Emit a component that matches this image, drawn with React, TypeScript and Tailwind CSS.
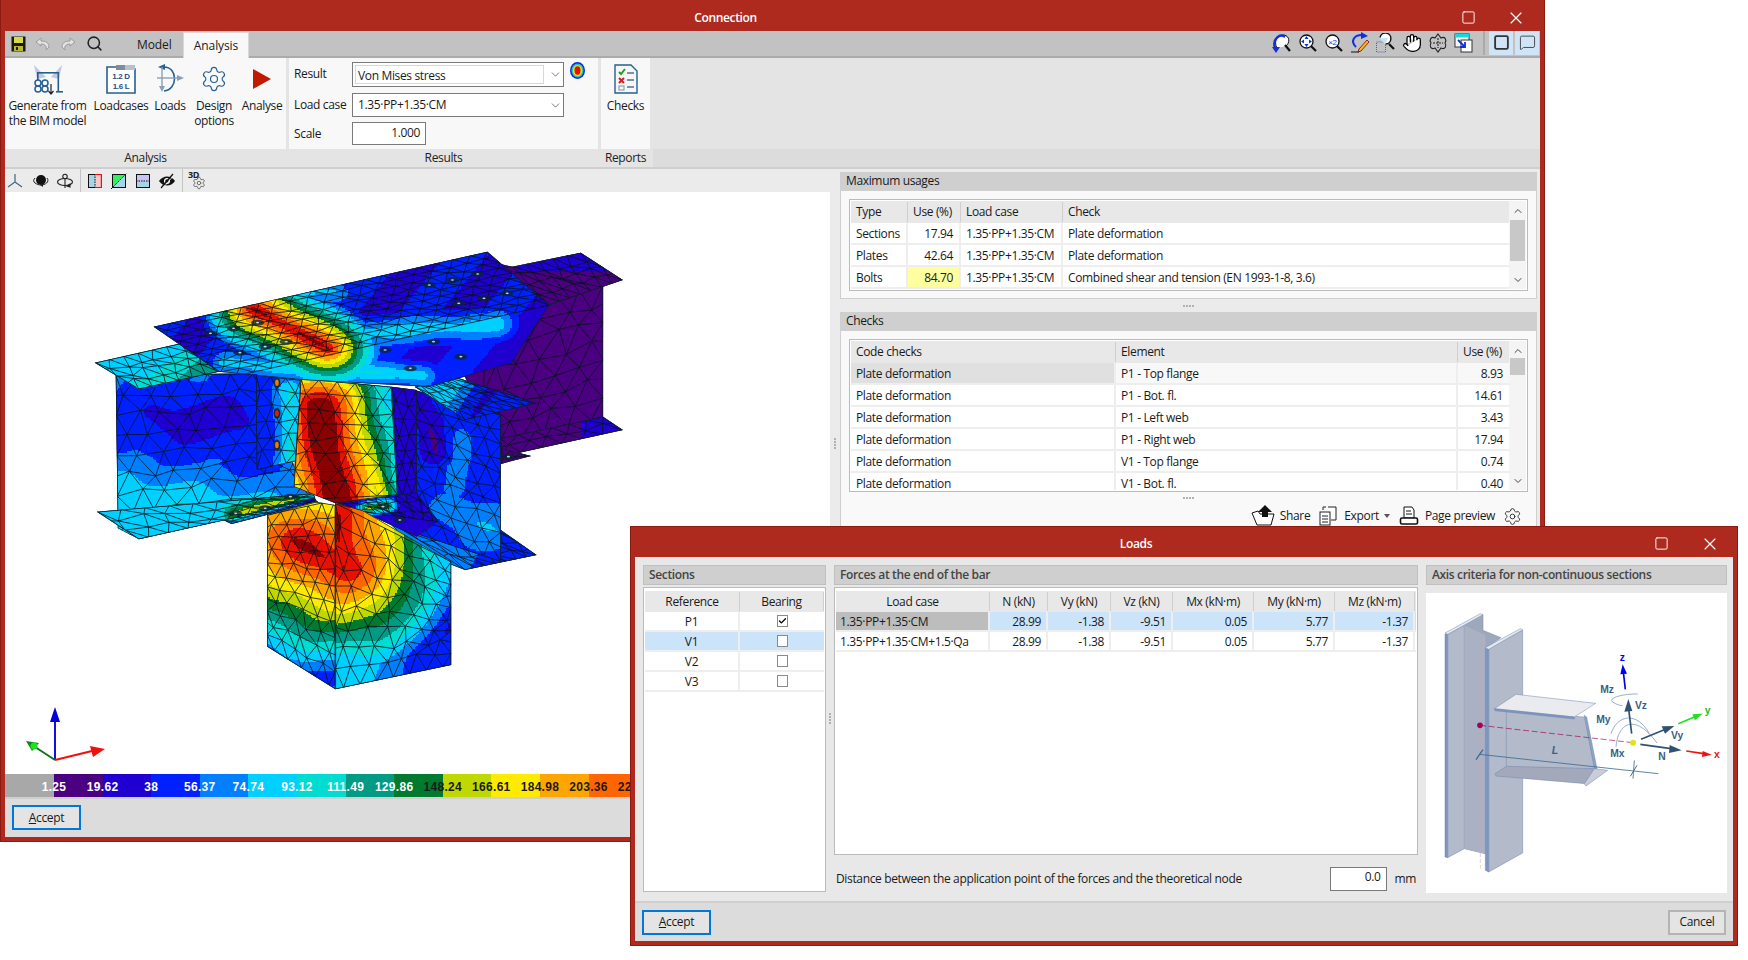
import { useMemo } from "react";
import { ChevronDown, ChevronUp, Check, Settings, Hand, Search, Square, X, MessageSquare } from "lucide-react";

type Pt = [number, number];
type Face = { poly: Pt[]; quad?: Pt[]; nu: number; nv: number; field: (x: number, y: number) => number };

const BANDS = ["#4B0082", "#2000D0", "#0020FF", "#0080FF", "#00D0FF", "#00DCD2", "#009A85", "#007A2E", "#BFD800", "#FFEB00", "#FFA500", "#FF6600", "#E81000", "#8B0000"];

// linear falloff around a segment, values are given in crop coordinates of the model
function seg(x: number, y: number, x1: number, y1: number, x2: number, y2: number, r: number) {
  const dx = x2 - x1;
  const dy = y2 - y1;
  const t = Math.max(0, Math.min(1, ((x - x1) * dx + (y - y1) * dy) / (dx * dx + dy * dy || 1)));
  const d = Math.hypot(x - x1 - t * dx, y - y1 - t * dy);
  return Math.max(0, 1 - d / r);
}
const clamp01 = (v: number) => Math.max(0, Math.min(1, v));

const FACES: Face[] = [
  { poly: [[1305, 315], [1433, 255], [1433, 650], [1190, 745], [1100, 520]], quad: [[1150, 330], [1433, 255], [1433, 650], [1150, 760]], nu: 5, nv: 7, field: () => 0.5 },
  { poly: [[1150, 180], [1217, 200], [1380, 158], [1480, 240], [1305, 315]], quad: [[1150, 215], [1380, 158], [1480, 240], [1305, 315]], nu: 7, nv: 4, field: (x, y) => (x > 1230 && y < 215 ? 1.5 : 0.5) },
  { poly: [[1190, 715], [1433, 650], [1480, 690], [1190, 770]], nu: 6, nv: 2, field: (x) => (x > 1380 ? 1.5 : 0.6) },
  { poly: [[1190, 745], [1262, 768], [1190, 792]], quad: [[1190, 745], [1262, 768], [1262, 780], [1190, 792]], nu: 3, nv: 2, field: () => 0.5 },
  {
    poly: [[275, 525], [610, 520], [700, 800], [745, 900], [330, 1018], [280, 985]],
    quad: [[275, 525], [710, 520], [745, 900], [280, 1010]],
    nu: 8,
    nv: 8,
    field: (x, y) => 2.8 - 1.4 * seg(x, y, 400, 660, 560, 660, 120) + clamp01((y - 770 - (x - 400) * 0.18) / 130) * 2,
  },
  { poly: [[225, 488], [430, 430], [520, 515], [330, 568]], nu: 6, nv: 4, field: (x, y) => 4.6 + clamp01((x - 330 + y - 500) / 200) * 2.2 },
  { poly: [[230, 935], [745, 880], [750, 900], [330, 1018]], nu: 9, nv: 3, field: (x, y) => 4.5 + 4 * seg(x, y, 555, 940, 700, 895, 40) },
  { poly: [[530, 960], [745, 895], [755, 905], [550, 972]], nu: 8, nv: 2, field: (x, y) => 2 + 6 * seg(x, y, 550, 945, 700, 890, 30) },
  { poly: [[900, 940], [1190, 990], [1275, 1065], [1105, 1110], [1000, 1060]], quad: [[900, 940], [1190, 990], [1275, 1065], [1105, 1110]], nu: 7, nv: 4, field: (x) => 3.4 - (x - 1000) / 260 },
  {
    poly: [[985, 570], [1190, 645], [1190, 1085], [985, 1000]],
    nu: 5,
    nv: 10,
    field: (x, y) => 2.4 + 1.5 * seg(x, y, 1090, 940, 1190, 1000, 100) + 0.9 * seg(x, y, 1090, 700, 1090, 840, 50) - 1.4 * seg(x, y, 1000, 600, 1040, 760, 45),
  },
  { poly: [[930, 560], [990, 570], [990, 880], [945, 890]], nu: 2, nv: 7, field: () => 1.4 },
  { poly: [[985, 560], [1080, 530], [1275, 610], [1105, 660]], nu: 7, nv: 4, field: (x, y) => 4.6 - clamp01((x - 1060 + (y - 590) * 0.5) / 90) * 2.6 },
  { poly: [[790, 905], [990, 878], [1040, 965], [990, 1010], [860, 935]], quad: [[790, 905], [990, 878], [1040, 965], [860, 935]], nu: 8, nv: 3, field: (x, y) => 1.6 + 7 * seg(x, y, 870, 925, 920, 915, 30) },
  {
    poly: [[635, 945], [750, 905], [797, 915], [797, 1468], [635, 1340]],
    quad: [[635, 945], [797, 900], [797, 1468], [635, 1340]],
    nu: 5,
    nv: 11,
    field: (x, y) => 3 + 10.2 * seg(x, y, 700, 1020, 797, 1090, 330),
  },
  {
    poly: [[797, 910], [860, 930], [1072, 1085], [1072, 1395], [797, 1468]],
    quad: [[797, 910], [1072, 1085], [1072, 1395], [797, 1468]],
    nu: 7,
    nv: 9,
    field: (x, y) => Math.max(2.2 + 2.6 * clamp01(1 - (x - 800) / 260), 3 + 10.2 * seg(x, y, 797, 950, 815, 1100, 330) - 1.5 * clamp01((x - 900) / 150)),
  },
  { poly: [[608, 525], [715, 540], [715, 780], [610, 810]], nu: 3, nv: 6, field: (x, y) => 2.5 + 2.8 * seg(x, y, 690, 570, 690, 790, 50) },
  {
    poly: [[715, 535], [930, 560], [945, 885], [797, 910], [697, 860], [700, 795]],
    quad: [[715, 535], [930, 560], [945, 885], [697, 900]],
    nu: 5,
    nv: 8,
    field: (x, y) => Math.max(5.2, 15 * seg(x, y, 755, 620, 800, 910, 240), 9.6 * seg(x, y, 830, 650, 905, 880, 110)),
  },
  {
    poly: [[365, 380], [1158, 155], [1305, 315], [1215, 490], [1020, 560], [720, 540], [520, 515]],
    quad: [[365, 380], [1158, 155], [1305, 315], [520, 540]],
    nu: 19,
    nv: 10,
    field: (x, y) => {
      const hot = 2 + 11.2 * seg(x, y, 600, 325, 780, 445, 130);
      const ring = 1 + 11.4 * seg(x, y, 770, 452, 770, 452, 95);
      const cool = 3 * seg(x, y, 850, 400, 1180, 372, 60) + 2.6 * seg(x, y, 680, 290, 790, 270, 60) + 3.2 * seg(x, y, 540, 490, 1000, 525, 50);
      const base = x > 960 && y < 280 ? 0.5 : x > 720 && y < 270 ? 1.5 : 1.8;
      return Math.max(base + cool, hot, ring);
    },
  },
];

const BOLTS: Pt[] = [[500, 400], [555, 385], [612, 368], [570, 458], [630, 440], [680, 425], [1020, 255], [1075, 240], [1135, 222], [1090, 310], [1150, 295], [1205, 280], [915, 450], [975, 505], [1030, 425], [1095, 470], [560, 940], [630, 925], [690, 890], [910, 920], [950, 960], [1208, 770]];
const z = ([x, y]: Pt): Pt => [x / 2.376, 200 + y / 3];
const pts = (p: Pt[]) => p.map((q) => z(q).map((n) => n.toFixed(1)).join(",")).join(" ");

function buildFace(f: Face, idx: number) {
  const real = f.poly.map(z);
  const xs = real.map((p) => p[0]);
  const ys = real.map((p) => p[1]);
  const x0 = Math.floor(Math.min(...xs));
  const x1 = Math.ceil(Math.max(...xs));
  const y0 = Math.floor(Math.min(...ys));
  const y1 = Math.ceil(Math.max(...ys));
  const paths: string[] = BANDS.map(() => "");
  const step = 1.5;
  for (let y = y0; y < y1; y += step) {
    let start = x0;
    let cur = -1;
    for (let x = x0; x <= x1 + step; x += step) {
      const zx = (x + step / 2) * 2.376;
      const zy = (y + step / 2 - 200) * 3;
      const v = x > x1 ? -1 : Math.max(0, Math.min(13, Math.floor(f.field(zx, zy) + 0.25 * Math.sin(zx / 31 + zy / 47))));
      if (v !== cur) {
        if (cur >= 0) paths[cur] += `M${start} ${y}H${x}V${y + step}H${start}Z`;
        start = x;
        cur = v;
      }
    }
  }
  // staggered triangle lattice, moved a little at each inner node
  const q = (f.quad ?? f.poly).map(z);
  let seed = 17 + idx * 31;
  const rnd = () => {
    seed = (seed * 16807) % 2147483647;
    return seed / 2147483647 - 0.5;
  };
  const du = Math.hypot(q[1][0] - q[0][0], q[1][1] - q[0][1]) / f.nu;
  const dv = Math.hypot(q[3][0] - q[0][0], q[3][1] - q[0][1]) / f.nv;
  const amp = Math.min(du, dv) * 0.45;
  const grid: Pt[][] = [];
  for (let j = 0; j <= f.nv; j++) {
    const row: Pt[] = [];
    const odd = j % 2 === 1;
    const count = odd ? f.nu + 2 : f.nu + 1;
    for (let i = 0; i < count; i++) {
      const u = odd ? clamp01((i - 0.5) / f.nu) : i / f.nu;
      const v = j / f.nv;
      const px = (1 - v) * ((1 - u) * q[0][0] + u * q[1][0]) + v * ((1 - u) * q[3][0] + u * q[2][0]);
      const py = (1 - v) * ((1 - u) * q[0][1] + u * q[1][1]) + v * ((1 - u) * q[3][1] + u * q[2][1]);
      const inner = i > 0 && j > 0 && i < count - 1 && j < f.nv;
      row.push([px + (inner ? rnd() * amp : 0), py + (inner ? rnd() * amp : 0)]);
    }
    grid.push(row);
  }
  let mesh = "";
  const ln = (a: Pt, b: Pt) => {
    mesh += `M${a[0].toFixed(1)} ${a[1].toFixed(1)}L${b[0].toFixed(1)} ${b[1].toFixed(1)}`;
  };
  for (let j = 0; j <= f.nv; j++) {
    const row = grid[j];
    for (let i = 0; i < row.length - 1; i++) ln(row[i], row[i + 1]);
    if (j === f.nv) break;
    const next = grid[j + 1];
    if (j % 2 === 0) {
      row.forEach((p, i) => {
        ln(p, next[i]);
        ln(p, next[i + 1]);
      });
    } else {
      next.forEach((p, i) => {
        ln(p, row[i]);
        ln(p, row[i + 1]);
      });
    }
  }
  return { paths, mesh };
}

function ModelView() {
  const built = useMemo(() => FACES.map(buildFace), []);
  return (
    <svg viewBox="5 192 825 582" className="w-full h-full block">
      <defs>
        {FACES.map((f, i) => (
          <clipPath id={`face${i}`} key={i}>
            <polygon points={pts(f.poly)} />
          </clipPath>
        ))}
      </defs>
      {FACES.map((f, i) => (
        <g key={i} clipPath={`url(#face${i})`}>
          {built[i].paths.map((d, b) => d && <path key={b} d={d} fill={BANDS[b]} shapeRendering="crispEdges" />)}
          <path d={built[i].mesh} fill="none" stroke="#04141c" strokeWidth="0.8" />
          <polygon points={pts(f.poly)} fill="none" stroke="#10202a" strokeWidth="1.4" />
        </g>
      ))}
      {BOLTS.map((b, i) => {
        const [x, y] = z(b);
        return (
          <g key={i}>
            <ellipse cx={x} cy={y} rx="6.5" ry="3" fill="#0a2430" fillOpacity="0.75" />
            <ellipse cx={x} cy={y} rx="1.6" ry="0.8" fill="#c8d4d4" />
          </g>
        );
      })}
      {([[658, 548], [658, 640], [658, 735]] as Pt[]).map((b, i) => {
        const [x, y] = z(b);
        return (
          <g key={i}>
            <ellipse cx={x} cy={y} rx="3.4" ry="5.5" fill="#122c3a" />
            <ellipse cx={x} cy={y} rx="1.8" ry="3.2" fill={i === 1 ? "#e02000" : "#f07a10"} />
          </g>
        );
      })}
      {/* axes */}
      <line x1="55" y1="760" x2="55" y2="715" stroke="#1010e0" strokeWidth="2" />
      <polygon points="55,707 50,722 60,722" fill="#0000e0" />
      <line x1="55" y1="760" x2="32" y2="745" stroke="#107020" strokeWidth="2" />
      <polygon points="26,741 39,743 32,751" fill="#0a8a1c" />
      <circle cx="34" cy="746" r="3.5" fill="#20e020" />
      <line x1="55" y1="760" x2="92" y2="751" stroke="#f01010" strokeWidth="2" />
      <polygon points="105,749 90,746 93,757" fill="#f01010" />
    </svg>
  );
}

const LEGEND: { c: string; w?: number; t?: string; dark?: boolean }[] = [
  { c: "#A8A8A8", w: 49 },
  { c: "#4B0082", t: "1.25" },
  { c: "#2000D0", t: "19.62" },
  { c: "#0020FF", t: "38" },
  { c: "#0080FF", t: "56.37" },
  { c: "#00D0FF", t: "74.74" },
  { c: "#00DCD2", t: "93.12" },
  { c: "#009A85", t: "111.49" },
  { c: "#007A2E", t: "129.86" },
  { c: "#BFD800", t: "148.24", dark: true },
  { c: "#FFEB00", t: "166.61", dark: true },
  { c: "#FFA500", t: "184.98", dark: true },
  { c: "#FF6600", t: "203.36", dark: true },
  { c: "#E81000", t: "221.73", dark: true },
];

function SaveIcon() {
  return (
    <svg width="15" height="16" viewBox="0 0 15 16">
      <rect x="0.5" y="0.5" width="14" height="15" fill="#1a1a10" />
      <rect x="3" y="1" width="9" height="6" fill="#d8d850" />
      <rect x="3" y="10" width="9" height="5" fill="#b8b838" />
      <rect x="5" y="11" width="2" height="3" fill="#1a1a10" />
    </svg>
  );
}
function UndoIcon({ flip }: { flip?: boolean }) {
  return (
    <svg width="16" height="14" viewBox="0 0 16 14" className={flip ? "-scale-x-100" : ""}>
      <path d="M1 5 L6 1 V4 C11 4 14 6 14 10 L11 13 C12 9 10 7 6 7 V9 Z" fill="#e2e2e2" stroke="#9a9a9a" />
    </svg>
  );
}
function GenIcon() {
  return (
    <svg width="34" height="32" viewBox="0 0 34 32">
      <polygon points="3,2 15,14 6,16" fill="#bfc8e6" />
      <polygon points="31,2 20,14 28,16" fill="#bfc8e6" />
      <rect x="6" y="9" width="22" height="1.6" fill="#27608f" />
      <rect x="6" y="9" width="1.6" height="8" fill="#27608f" />
      <rect x="26.5" y="9" width="1.6" height="20" fill="#27608f" />
      <rect x="25" y="28" width="7" height="1.6" fill="#27608f" />
      <g fill="none" stroke="#27608f" strokeWidth="1.5">
        <circle cx="7" cy="20" r="3" /><circle cx="14" cy="20" r="3" /><circle cx="7" cy="26" r="3" /><circle cx="14" cy="26" r="3" />
      </g>
      <path d="M20 21V30M17.5 28L20 31L22.5 28" stroke="#222" strokeWidth="1.2" fill="none" />
    </svg>
  );
}
function LoadcaseIcon() {
  return (
    <svg width="30" height="30" viewBox="0 0 30 30">
      <path d="M1 3H12L14 5H29V29H1Z" fill="#fff" stroke="#27608f" strokeWidth="1.6" />
      <rect x="10" y="1" width="9" height="5" fill="#7f8ba0" />
      <rect x="19" y="1" width="10" height="5" fill="#b9c0cc" />
      <text x="15" y="15" textAnchor="middle" fontSize="8" fontWeight="700" fill="#27507a" fontFamily="Liberation Sans, sans-serif">1.2 D</text>
      <text x="15" y="25" textAnchor="middle" fontSize="8" fontWeight="700" fill="#27507a" fontFamily="Liberation Sans, sans-serif">1.6 L</text>
    </svg>
  );
}
function LoadsIcon() {
  return (
    <svg width="28" height="30" viewBox="0 0 28 30">
      <path d="M8 3 C22 3 22 26 8 27" fill="none" stroke="#27608f" strokeWidth="1.6" />
      <polygon points="2,3 9,0 9,6" fill="#27608f" />
      <line x1="6" y1="3" x2="6" y2="25" stroke="#8ba0b8" strokeWidth="1.4" />
      <line x1="1" y1="14" x2="23" y2="14" stroke="#8ba0b8" strokeWidth="1.4" />
      <polygon points="28,14 21,11 21,17" fill="#8ba0b8" />
      <polygon points="6,28 3,22 9,22" fill="#8ba0b8" />
    </svg>
  );
}
function ChecksIcon() {
  return (
    <svg width="24" height="30" viewBox="0 0 24 30">
      <path d="M1 1H17L23 7V29H1Z" fill="#f4f6f9" stroke="#27608f" strokeWidth="1.4" />
      <path d="M5 8L7 10L11 5" stroke="#20a020" strokeWidth="2" fill="none" />
      <path d="M5 14L10 19M10 14L5 19" stroke="#d02020" strokeWidth="2" />
      <rect x="5" y="22" width="5" height="4" fill="none" stroke="#8090a8" />
      <path d="M13 9H20M13 16H20M13 23H20" stroke="#8090a8" strokeWidth="2" />
    </svg>
  );
}
function Rainbow() {
  return (
    <svg width="15" height="17" viewBox="0 0 15 17" className="mb-auto ml-[6px]">
      <ellipse cx="7.5" cy="8.5" rx="7.5" ry="8.5" fill="#1020f0" />
      <ellipse cx="7.5" cy="8.5" rx="6" ry="7" fill="#10d0b0" />
      <ellipse cx="7.5" cy="8.5" rx="4.6" ry="5.6" fill="#f0e000" />
      <ellipse cx="7.5" cy="8.5" rx="3" ry="4.2" fill="#e01010" />
    </svg>
  );
}

function ToolIcon({ n }: { n: number }) {
  const blue = "#1030e0";
  const k = "#111";
  const glass = (
    <>
      <circle cx="8.5" cy="8.5" r="6.5" fill="#fff" stroke={k} strokeWidth="1.3" />
      <path d="M13 13L18 18" stroke={k} strokeWidth="2.2" />
    </>
  );
  if (n === 0)
    return (
      <svg width="20" height="20" viewBox="0 0 20 20">
        <path d="M5 15C1 8 6 1 12 2C18 3 18 10 14 13" fill="#fff" stroke={k} />
        <path d="M13 12L18 18" stroke={k} strokeWidth="2.2" />
        <path d="M3 15C0 6 8 0 13 4" fill="none" stroke={blue} strokeWidth="2.4" />
        <polygon points="0,14 8,14 4,20" fill={blue} />
      </svg>
    );
  if (n === 1)
    return (
      <svg width="20" height="20" viewBox="0 0 20 20">
        {glass}
        <path d="M8.5 3L6.5 6H10.5ZM8.5 14L6.5 11H10.5ZM3 8.5L6 6.5V10.5ZM14 8.5L11 6.5V10.5Z" fill={blue} />
      </svg>
    );
  if (n === 2)
    return (
      <svg width="20" height="20" viewBox="0 0 20 20">
        {glass}
        <text x="8.5" y="11.5" fontSize="8" textAnchor="middle" fill={blue} fontFamily="Liberation Sans, sans-serif">×2</text>
      </svg>
    );
  if (n === 3)
    return (
      <svg width="20" height="22" viewBox="0 0 20 22">
        <path d="M6 15C0 9 4 3 12 3" fill="none" stroke={blue} strokeWidth="2" />
        <polygon points="11,0 18,4 11,7" fill={blue} />
        <path d="M9 17L17 8L19 10L11 19L8 20Z" fill="#e8c020" stroke="#a02020" />
        <path d="M1 20H9" stroke={k} />
      </svg>
    );
  if (n === 4)
    return (
      <svg width="20" height="20" viewBox="0 0 20 20">
        <rect x="0.5" y="9" width="9" height="10" fill="none" stroke="#4060d0" strokeDasharray="1 1" />
        <path d="M4 4.5A5.5 5.5 0 1 1 9.5 11" fill="#fff" stroke={k} strokeWidth="1.4" />
        <path d="M3 5H12L9 11Z" fill="#c4e4ee" />
        <path d="M13 11L18 16" stroke={k} strokeWidth="2.2" />
      </svg>
    );
  if (n === 5) return <Hand size={20} strokeWidth={1.5} className="text-black fill-white" />;
  if (n === 6)
    return (
      <svg width="20" height="20" viewBox="0 0 20 20" fill="none" stroke="#222" strokeWidth="1.1">
        <path d="M10 1L13 5C17 3 19 7 17 10C19 13 17 17 13 15L10 19L7 15C3 17 1 13 3 10C1 7 3 3 7 5Z" />
        <path d="M10 5V15M5 10H15" strokeDasharray="2 1" />
      </svg>
    );
  return (
    <svg width="20" height="20" viewBox="0 0 20 20">
      <rect x="1" y="1" width="14" height="13" fill="#fff" stroke="#333" />
      <rect x="1" y="1" width="14" height="3.5" fill="#18d8d8" />
      <rect x="7" y="7" width="11" height="12" fill="#fff" stroke="#333" />
      <path d="M4 7L11 14M11 9V14H6" stroke={blue} strokeWidth="1.8" fill="none" />
    </svg>
  );
}

function ViewIcon({ n }: { n: number }) {
  if (n === 0)
    return (
      <svg width="16" height="16" viewBox="0 0 16 16" fill="none" stroke="#3a6a80" strokeWidth="1.2">
        <path d="M8 1V9L1 14M8 9L15 14" />
      </svg>
    );
  if (n === 1)
    return (
      <svg width="18" height="16" viewBox="0 0 18 16">
        <circle cx="9" cy="7" r="5" fill="#111" />
        <path d="M3 5C-1 9 5 12 9 12C13 12 18 9 15 5" fill="none" stroke="#222" />
        <path d="M8 12L11 10V14Z" fill="#222" />
      </svg>
    );
  if (n === 2)
    return (
      <svg width="18" height="16" viewBox="0 0 18 16" fill="none" stroke="#222" strokeWidth="1.1">
        <circle cx="9" cy="3.5" r="2.2" />
        <path d="M9 6V15" />
        <ellipse cx="9" cy="9" rx="7.5" ry="3.5" />
        <path d="M11 13L14 11V14Z" fill="#222" />
      </svg>
    );
  if (n === 3)
    return (
      <svg width="14" height="14" viewBox="0 0 14 14">
        <rect x="0.5" y="0.5" width="13" height="13" fill="#a8d4e8" stroke="#111" />
        <rect x="7" y="1" width="6" height="12" fill="#f8c8c8" />
        <path d="M7 0V14" stroke="#111" strokeDasharray="1.5 1" />
        <path d="M13.5 0V14" stroke="#e81010" strokeWidth="1.4" />
        <path d="M7 0.5H14M7 13.5H14" stroke="#e81010" />
      </svg>
    );
  if (n === 4)
    return (
      <svg width="16" height="16" viewBox="0 0 16 16">
        <rect x="1.5" y="1.5" width="13" height="13" fill="#a8d4e8" stroke="#111" />
        <polygon points="2,2 14,2 2,14" fill="#30f060" />
        <path d="M0 16L16 0" stroke="#111" strokeDasharray="1.5 1" />
      </svg>
    );
  if (n === 5)
    return (
      <svg width="14" height="14" viewBox="0 0 14 14">
        <rect x="0.5" y="0.5" width="13" height="13" fill="#a8d4e8" stroke="#111" />
        <rect x="1" y="1" width="12" height="6" fill="#c8c4f4" />
        <path d="M0 7H14" stroke="#111" strokeDasharray="1.5 1" />
      </svg>
    );
  if (n === 6)
    return (
      <svg width="18" height="16" viewBox="0 0 18 16">
        <path d="M1 8C5 2 13 2 17 8C13 14 5 14 1 8Z" fill="#111" />
        <circle cx="9" cy="8" r="3" fill="#fff" />
        <circle cx="9" cy="8" r="1.8" fill="#111" />
        <path d="M3 15L15 1" stroke="#111" strokeWidth="1.2" />
        <path d="M5 15L17 1" stroke="#eee" strokeWidth="0.8" />
      </svg>
    );
  return (
    <div className="relative w-[18px] h-[18px]">
      <Settings size={14} strokeWidth={1.6} className="absolute right-0 bottom-0 text-[#666]" />
      <span className="absolute left-0 top-[-2px] text-[9px] font-bold leading-[10px] text-[#222]">3D</span>
    </div>
  );
}

function ViewSlot({ w, ml, n }: { w: number; ml?: number; n: number }) {
  return (
    <div style={{ width: w, marginLeft: ml ?? 0 }} className="shrink-0 flex items-center justify-center">
      <ViewIcon n={n} />
    </div>
  );
}

function RibbonBtn({ w, icon, children }: { w: number; icon: React.ReactNode; children: React.ReactNode }) {
  return (
    <div style={{ width: w }} className="shrink-0 flex flex-col items-center pt-[5px]">
      <div className="h-[32px] flex items-center justify-center">{icon}</div>
      <div className="mt-[3px] text-center leading-[15px] whitespace-pre">{children}</div>
    </div>
  );
}

function Group({ w, label, children }: { w: number; label: string; children: React.ReactNode }) {
  return (
    <div style={{ width: w }} className="shrink-0 flex flex-col mr-[3px] bg-[#f8f8f8]">
      <div className="flex-1 flex">{children}</div>
      <div className="h-[18px] bg-[#e4e4e4] text-center leading-[18px] text-[#222]">{label}</div>
    </div>
  );
}

function Combo({ value, inner }: { value: string; inner?: boolean }) {
  return (
    <div className={`w-[212px] border border-[#7a7a7a] bg-white flex items-center ${inner ? "h-[25px] p-[2px] pr-0" : "h-[24px] pl-[5px]"}`}>
      <div className={`flex-1 ${inner ? "h-full border border-[#d8d8d8] pl-[2px] leading-[19px]" : ""}`}>{value}</div>
      <ChevronDown size={13} strokeWidth={1.3} className="mx-[1px] ml-[5px] text-[#444]" />
    </div>
  );
}

function ScrollCol({ top, h }: { top: number; h: number }) {
  return (
    <div className="w-[17px] shrink-0 bg-[#f4f4f4] flex flex-col items-center">
      <ChevronUp size={12} strokeWidth={2} className="mt-[4px] shrink-0 text-[#444]" />
      <div style={{ marginTop: top, height: h }} className="w-[15px] bg-[#c8c8c8] shrink-0" />
      <ChevronDown size={12} strokeWidth={2} className="mt-auto mb-[3px] shrink-0 text-[#444]" />
    </div>
  );
}

type Col = { w: number; label: string; right?: boolean };

function Row({ cols, cells, bg }: { cols: Col[]; cells: string[]; bg?: (i: number) => string }) {
  return (
    <div className="flex h-[22px] border-b-2 border-[#eeeeee] bg-white shrink-0">
      {cols.map((c, i) => (
        <div
          key={i}
          style={{ width: c.w, backgroundColor: bg ? bg(i) : undefined }}
          className={`shrink-0 border-r-2 border-[#eeeeee] pl-[5px] pr-[6px] leading-[22px] whitespace-nowrap ${c.right ? "text-right" : ""}`}
        >
          {cells[i]}
        </div>
      ))}
    </div>
  );
}

function Head({ cols }: { cols: Col[] }) {
  return (
    <div className="flex h-[22px] bg-[#e8e8e8] shrink-0">
      {cols.map((c, i) => (
        <div key={i} style={{ width: c.w }} className="shrink-0 pl-[5px] pr-[6px] leading-[19px] my-[1px] border-r border-[#cfcfcf] whitespace-nowrap">
          {c.label}
        </div>
      ))}
    </div>
  );
}

const USAGE_COLS: Col[] = [
  { w: 57, label: "Type" },
  { w: 53, label: "Use (%)", right: true },
  { w: 102, label: "Load case" },
  { w: 448, label: "Check" },
];
const USAGES = [
  ["Sections", "17.94", "1.35·PP+1.35·CM", "Plate deformation"],
  ["Plates", "42.64", "1.35·PP+1.35·CM", "Plate deformation"],
  ["Bolts", "84.70", "1.35·PP+1.35·CM", "Combined shear and tension (EN 1993-1-8, 3.6)"],
];
const CHECK_COLS: Col[] = [
  { w: 265, label: "Code checks" },
  { w: 342, label: "Element" },
  { w: 53, label: "Use (%)", right: true },
];
const CHECKS = [
  ["P1 - Top flange", "8.93"],
  ["P1 - Bot. fl.", "14.61"],
  ["P1 - Left web", "3.43"],
  ["P1 - Right web", "17.94"],
  ["V1 - Top flange", "0.74"],
  ["V1 - Bot. fl.", "0.40"],
];

function Dots() {
  return (
    <div className="flex gap-[1px] justify-center">
      {[0, 1, 2, 3].map((i) => (
        <span key={i} className="w-[2px] h-[2px] bg-[#b0b0b0]" />
      ))}
    </div>
  );
}

function ShareIcon() {
  return (
    <svg width="24" height="22" viewBox="0 0 24 22">
      <path d="M1 8L6 20H20L23 9H9L7 6Z" fill="#fff" stroke="#111" />
      <polygon points="14,0 21,7 17,7 17,12 11,12 11,7 7,7" fill="#111" />
    </svg>
  );
}
function ExportIcon() {
  return (
    <svg width="20" height="20" viewBox="0 0 20 20" fill="#fff" stroke="#222">
      <path d="M10 1H18V14H13" />
      <rect x="2" y="6" width="10" height="13" />
      <path d="M4 10H10M4 13H10M4 16H10M5 4V1H8" fill="none" />
    </svg>
  );
}
function PrintIcon() {
  return (
    <svg width="20" height="20" viewBox="0 0 20 20" fill="#fff" stroke="#111">
      <path d="M5 1H13L15 4V12H5Z" />
      <path d="M7 5H12M7 8H13" />
      <rect x="1.5" y="12" width="17" height="6" rx="1.5" strokeWidth="1.6" />
    </svg>
  );
}

const SECTIONS = [
  { r: "P1", on: true },
  { r: "V1", sel: true },
  { r: "V2" },
  { r: "V3" },
];
const FORCE_COLS = [
  { w: 154, label: "Load case" },
  { w: 58, label: "N (kN)" },
  { w: 63, label: "Vy (kN)" },
  { w: 62, label: "Vz (kN)" },
  { w: 81, label: "Mx (kN·m)" },
  { w: 81, label: "My (kN·m)" },
  { w: 80, label: "Mz (kN·m)" },
];
const FORCES = [
  ["1.35·PP+1.35·CM", "28.99", "-1.38", "-9.51", "0.05", "5.77", "-1.37"],
  ["1.35·PP+1.35·CM+1.5·Qa", "28.99", "-1.38", "-9.51", "0.05", "5.77", "-1.37"],
];

function AxisPicture() {
  return (
    <svg viewBox="15 218 903 900" className="w-full h-full block" fontFamily="Liberation Sans, sans-serif">
      <g stroke="#7088b0" strokeWidth="1.5">
        <polygon points="130,315 186,283 186,330 240,352 193,384 193,1000 130,985" fill="#9ea8bc" />
        <polygon points="80,342 130,315 130,985 80,1012" fill="#b3bac9" />
        <polygon points="130,315 193,345 193,1000 130,985" fill="#a9b1c2" stroke="none" />
        <polygon points="72,340 80,342 80,1012 72,1010" fill="#7d96bf" />
        <polygon points="72,338 178,280 186,283 80,342" fill="#e7eaf0" />
        <polygon points="203,385 305,330 305,998 203,1055" fill="#b3bac9" />
        <polygon points="193,384 203,385 203,1055 193,1050" fill="#7d96bf" />
        <polygon points="193,382 298,325 305,328 203,387" fill="#e7eaf0" />
        <polygon points="256,572 490,590 523,745 256,742" fill="#b3bac9" />
        <polygon points="490,585 497,590 528,745 520,745" fill="#8ea2c2" />
        <polygon points="222,760 256,738 520,745 495,790 225,767" fill="#a3a9ba" />
        <polygon points="520,745 560,750 495,797 490,790" fill="#c8cdd8" />
        <polygon points="220,565 285,522 524,549 460,590" fill="#e9ebef" />
        <polygon points="220,565 460,590 460,596 222,571" fill="#7d96bf" />
      </g>
      <line x1="178" y1="350" x2="178" y2="1045" stroke="#c9a0b8" strokeWidth="1.5" strokeDasharray="12 6" />
      <line x1="177" y1="615" x2="636" y2="667" stroke="#a6005f" strokeWidth="2" strokeDasharray="18 8" />
      <circle cx="177" cy="615" r="8.5" fill="#a6005f" />
      <circle cx="636" cy="667" r="9" fill="#e3e01d" />
      <g stroke="#3f6b96" strokeWidth="2.5" fill="none">
        <line x1="175" y1="702" x2="712" y2="760" />
        <line x1="165" y1="718" x2="186" y2="688" strokeWidth="4" />
        <line x1="628" y1="768" x2="648" y2="735" strokeWidth="3" />
        <line x1="640" y1="720" x2="636" y2="775" />
      </g>
      <g stroke="#5f89ad" strokeWidth="2" fill="none">
        <path d="M570 640C590 580 650 575 685 640" />
        <path d="M585 680C590 610 640 575 708 668" />
        <path d="M650 521C600 520 560 535 575 545C585 552 595 555 605 556" />
      </g>
      <g stroke="#2f5273" strokeWidth="5" fill="#2f5273">
        <line x1="632" y1="640" x2="623" y2="565" />
        <polygon points="622,536 610,574 634,572" strokeWidth="0" />
        <line x1="660" y1="657" x2="730" y2="628" />
        <polygon points="760,617 722,618 732,640" strokeWidth="0" />
        <line x1="658" y1="672" x2="750" y2="685" />
        <polygon points="782,690 746,674 744,698" strokeWidth="0" />
      </g>
      <line x1="613" y1="507" x2="607" y2="455" stroke="#0000f0" strokeWidth="5" />
      <polygon points="605,432 598,462 618,460" fill="#0000f0" />
      <line x1="772" y1="610" x2="820" y2="590" stroke="#20e020" strokeWidth="5" />
      <polygon points="845,580 814,582 822,600" fill="#20e020" />
      <line x1="796" y1="692" x2="848" y2="700" stroke="#f01010" strokeWidth="5" />
      <polygon points="872,703 845,692 843,710" fill="#f01010" />
      <g fontSize="31" fill="#3a5f86" fontWeight="700">
        <text x="538" y="518">Mz</text>
        <text x="642" y="567">Vz</text>
        <text x="526" y="608">My</text>
        <text x="750" y="655">Vy</text>
        <text x="568" y="710">Mx</text>
        <text x="712" y="718">N</text>
        <text x="392" y="700" fontStyle="italic">L</text>
      </g>
      <text x="596" y="421" fontSize="31" fontWeight="700" fill="#0000f0">z</text>
      <text x="851" y="582" fontSize="31" fontWeight="700" fill="#20c020">y</text>
      <text x="879" y="713" fontSize="31" fontWeight="700" fill="#f01010">x</text>
    </svg>
  );
}

function PanelHead({ label }: { label: string }) {
  return <div className="h-[20px] shrink-0 bg-[#cfcfcf] border border-[#c0c0c0] px-[5px] leading-[18px] font-semibold text-[#444]">{label}</div>;
}

export default function App() {
  return (
    <div className="relative w-[1748px] h-[960px] bg-white overflow-hidden font-['Open_Sans',sans-serif] text-[12px] tracking-[-0.35px] text-[#1a1a1a]">
      {/* Connection window */}
      <div className="absolute left-0 top-0 w-[1545px] h-[842px] flex flex-col bg-[#ae2a1e] border border-[#8c1a10] border-t-0 px-[4px] pb-[4px]">
        <div className="h-[31px] shrink-0 relative flex items-center justify-center text-white text-[12px] font-semibold pt-[5px] pr-[94px]">
          Connection
          <Square size={15} strokeWidth={1.5} className="absolute left-[1456px] top-[10px]" />
          <X size={20} strokeWidth={1.4} className="absolute left-[1501px] top-[8px]" />
        </div>
        {/* menu strip */}
        <div className="h-[27px] shrink-0 bg-[#c2c2c2] border-b-2 border-[#ababab] flex items-end">
          <div className="flex items-center h-[25px] pl-[6px] gap-[9px]">
            <SaveIcon />
            <UndoIcon />
            <UndoIcon flip />
            <Search size={17} strokeWidth={2.2} className="ml-[1px] text-[#222]" />
          </div>
          <div className="ml-[34px] h-[25px] leading-[27px] w-[46px] tracking-[-0.1px]">Model</div>
          <div className="h-[26px] mb-[-2px] w-[66px] bg-[#f8f8f8] border border-[#d8d8d8] border-b-0 text-center leading-[25px] tracking-[-0.1px]">Analysis</div>
          <div className="ml-auto flex items-center h-[25px] mb-[1px]">
            <div className="flex items-center gap-[6px]">
              {[0, 1, 2, 3, 4, 5, 6, 7].map((n) => (
                <ToolIcon key={n} n={n} />
              ))}
            </div>
            <div className="w-[2px] h-[24px] bg-[#aaaaaa] ml-[9px] mr-[4px]" />
            <div className="w-[24px] h-[24px] bg-[#cfe5f7] flex items-center justify-center mr-[2px]">
              <Square size={17} strokeWidth={2.6} className="text-[#333]" />
            </div>
            <div className="w-[24px] h-[24px] bg-[#cfe5f7] flex items-center justify-center mr-[1px]">
              <MessageSquare size={17} strokeWidth={1.2} className="text-[#333]" />
            </div>
          </div>
        </div>
        {/* ribbon */}
        <div className="h-[111px] shrink-0 flex bg-[#e4e4e4] border-b-2 border-[#cfcfcf]">
          <Group w={281} label="Analysis">
            <RibbonBtn w={85} icon={<GenIcon />}>{"Generate from\nthe BIM model"}</RibbonBtn>
            <RibbonBtn w={62} icon={<LoadcaseIcon />}>Loadcases</RibbonBtn>
            <RibbonBtn w={36} icon={<LoadsIcon />}>Loads</RibbonBtn>
            <RibbonBtn w={52} icon={<Settings size={28} strokeWidth={1} className="text-[#27608f]" />}>{"Design\noptions"}</RibbonBtn>
            <RibbonBtn
              w={44}
              icon={
                <svg width="20" height="22" viewBox="0 0 20 22">
                  <polygon points="1,1 19,11 1,21" fill="#c01a00" />
                </svg>
              }
            >
              Analyse
            </RibbonBtn>
          </Group>
          <Group w={309} label="Results">
            <div className="flex w-full pt-[4px] pl-[5px]">
              <div className="w-[58px] flex flex-col text-[12px]">
                <div className="h-[25px] leading-[24px]">Result</div>
                <div className="mt-[6px] h-[24px] leading-[23px]">Load case</div>
                <div className="mt-[5px] h-[23px] leading-[24px]">Scale</div>
              </div>
              <div className="flex flex-col">
                <Combo value="Von Mises stress" inner />
                <div className="mt-[6px]"><Combo value="1.35·PP+1.35·CM" /></div>
                <div className="mt-[5px] w-[74px] h-[23px] border border-[#7a7a7a] bg-white text-right pr-[5px] leading-[19px]">1.000</div>
              </div>
              <Rainbow />
            </div>
          </Group>
          <Group w={49} label="Reports">
            <RibbonBtn w={49} icon={<ChecksIcon />}>Checks</RibbonBtn>
          </Group>
          <div className="flex-1 flex flex-col">
            <div className="flex-1" />
            <div className="h-[18px] bg-[#dcdcdc]" />
          </div>
        </div>
        {/* body */}
        <div className="flex-1 min-h-0 flex bg-[#ebebeb]">
          <div className="w-[825px] shrink-0 flex flex-col">
            <div className="h-[23px] shrink-0 flex items-center bg-[#ebebeb]">
              <ViewSlot w={20} n={0} />
              <ViewSlot w={26} ml={3} n={1} />
              <ViewSlot w={22} n={2} />
              <div className="w-px h-[23px] bg-[#c4c4c4] ml-[4px]" />
              <ViewSlot w={24} ml={2} n={3} />
              <ViewSlot w={24} n={4} />
              <ViewSlot w={24} n={5} />
              <ViewSlot w={24} n={6} />
              <div className="w-px h-[23px] bg-[#c4c4c4] ml-[3px]" />
              <ViewSlot w={24} ml={2} n={7} />
            </div>
            <div className="h-[582px] shrink-0 bg-white">
              <ModelView />
            </div>
            <div className="h-[23px] shrink-0 flex overflow-hidden font-['Liberation_Sans',sans-serif] font-bold text-[12px] tracking-[0.3px]">
              {LEGEND.map((l, i) => (
                <div key={i} style={{ backgroundColor: l.c, width: l.w ?? 48.6 }} className="relative shrink-0">
                  {l.t && (
                    <span className={`absolute left-0 top-[4px] -translate-x-1/2 whitespace-nowrap ${l.dark ? "text-[#1a1a1a]" : "text-white"}`}>{l.t}</span>
                  )}
                </div>
              ))}
            </div>
            <div className="flex-1 bg-[#dcdcdc] border-t-2 border-[#cfcfcf] flex items-start pl-[7px] pt-[6px]">
              <button className="w-[69px] h-[25px] border-2 border-[#0078d7] bg-[#e4e4e4] leading-[20px]"><u>A</u>ccept</button>
            </div>
          </div>
          <div className="w-[10px] shrink-0 flex items-center justify-center">
            <div className="flex flex-col gap-[1px] mt-[-120px]">
              {[0, 1, 2, 3].map((i) => (
                <span key={i} className="w-[2px] h-[2px] bg-[#b0b0b0]" />
              ))}
            </div>
          </div>
          <div className="flex-1 min-w-0 flex flex-col pt-[3px] pr-[3px]">
            <div className="h-[127px] shrink-0 flex flex-col border border-[#cfcfcf] bg-[#f9f9f9]">
              <div className="h-[18px] shrink-0 bg-[#cfcfcf] px-[5px] leading-[15px]">Maximum usages</div>
              <div className="mx-[8px] mt-[8px] h-[92px] border border-[#bbbbbb] p-[1px] flex bg-white">
                <div className="flex-1 flex flex-col min-w-0">
                  <Head cols={USAGE_COLS} />
                  {USAGES.map((r, i) => (
                    <Row key={i} cols={USAGE_COLS} cells={r} bg={(c) => (i === 2 && c === 1 ? "#ffff9f" : "")} />
                  ))}
                </div>
                <ScrollCol top={3} h={41} />
              </div>
            </div>
            <div className="h-[13px] shrink-0 flex items-center"><div className="w-full"><Dots /></div></div>
            <div className="flex-1 min-h-0 flex flex-col border border-[#cfcfcf] bg-[#f9f9f9]">
              <div className="h-[18px] shrink-0 bg-[#cfcfcf] px-[5px] leading-[16px]">Checks</div>
              <div className="mx-[8px] mt-[8px] h-[153px] shrink-0 border border-[#bbbbbb] p-[1px] flex bg-white overflow-hidden">
                <div className="flex-1 flex flex-col min-w-0 overflow-hidden">
                  <Head cols={CHECK_COLS} />
                  {CHECKS.map((r, i) => (
                    <Row key={i} cols={CHECK_COLS} cells={["Plate deformation", r[0], r[1]]} bg={(c) => (i === 0 && c === 0 ? "#e0e0e0" : i === 0 ? "#f8f8f8" : "")} />
                  ))}
                </div>
                <ScrollCol top={1} h={17} />
              </div>
              <div className="h-[12px] shrink-0 flex items-center"><div className="w-full"><Dots /></div></div>
              <div className="flex items-center justify-end h-[24px] pr-[14px] text-[12px]">
                <ShareIcon />
                <span className="ml-[5px] mr-[8px]">Share</span>
                <ExportIcon />
                <span className="ml-[6px]">Export</span>
                <span className="ml-[5px] mr-[9px] w-0 h-0 border-x-[3px] border-x-transparent border-t-[4px] border-t-[#555]" />
                <PrintIcon />
                <span className="ml-[6px] mr-[8px]">Page preview</span>
                <Settings size={19} strokeWidth={1.1} className="text-[#222]" />
              </div>
            </div>
          </div>
        </div>
      </div>

      {/* Loads window */}
      <div className="absolute left-[630px] top-[526px] w-[1108px] h-[420px] flex flex-col bg-[#ae2a1e] border border-[#8c1a10] px-[4px] pb-[4px]">
        <div className="h-[30px] shrink-0 relative flex items-center justify-center text-white font-semibold pt-[3px] pr-[96px]">
          Loads
          <Square size={15} strokeWidth={1.5} className="absolute left-[1019px] top-[9px]" />
          <X size={20} strokeWidth={1.4} className="absolute left-[1065px] top-[7px]" />
        </div>
        <div className="flex-1 min-h-0 flex bg-[#e8e8e8] px-[8px] pt-[8px]">
          <div className="w-[183px] shrink-0 flex flex-col pb-[9px]">
            <PanelHead label="Sections" />
            <div className="mt-[2px] flex-1 border border-[#bbbbbb] bg-white p-[1px] pt-[3px]">
              <div className="flex h-[21px] bg-[#e8e8e8]">
                <div className="w-[95px] text-center leading-[19px] border-r border-[#cfcfcf] my-[1px]">Reference</div>
                <div className="w-[84px] text-center leading-[19px] border-r border-[#cfcfcf] my-[1px]">Bearing</div>
              </div>
              {SECTIONS.map((s) => (
                <div key={s.r} className={`flex h-[20px] border-b-2 border-[#eeeeee] ${s.sel ? "bg-[#cbe4f9]" : ""}`}>
                  <div className="w-[95px] text-center leading-[20px] border-r-2 border-[#eeeeee]">{s.r}</div>
                  <div className="w-[84px] flex items-center justify-center">
                    <div className="w-[11px] h-[12px] border border-[#8a8a8a] bg-white flex items-center justify-center">
                      {s.on && <Check size={10} strokeWidth={3.5} className="text-black" />}
                    </div>
                  </div>
                </div>
              ))}
            </div>
          </div>
          <div className="w-[8px] shrink-0 flex items-center justify-center">
            <div className="flex flex-col gap-[1px] mt-[-30px]">
              {[0, 1, 2, 3].map((i) => (
                <span key={i} className="w-[2px] h-[2px] bg-[#b0b0b0]" />
              ))}
            </div>
          </div>
          <div className="w-[584px] shrink-0 flex flex-col pb-[9px]">
            <PanelHead label="Forces at the end of the bar" />
            <div className="mt-[2px] h-[268px] shrink-0 border border-[#bbbbbb] bg-white p-[1px] pt-[3px] overflow-hidden">
              <div className="flex h-[21px] bg-[#e8e8e8]">
                {FORCE_COLS.map((c) => (
                  <div key={c.label} style={{ width: c.w }} className="shrink-0 text-center leading-[19px] border-r border-[#cfcfcf] my-[1px]">{c.label}</div>
                ))}
              </div>
              {FORCES.map((r, i) => (
                <div key={i} className={`flex h-[20px] border-b-2 border-[#eeeeee] ${i === 0 ? "bg-[#cbe4f9]" : ""}`}>
                  {r.map((t, j) => (
                    <div
                      key={j}
                      style={{ width: FORCE_COLS[j].w }}
                      className={`shrink-0 leading-[20px] border-r-2 border-[#eeeeee] whitespace-nowrap ${j === 0 ? "pl-[4px]" : "text-right pr-[5px]"} ${i === 0 && j === 0 ? "bg-[#bdbdbd]" : ""}`}
                    >
                      {t}
                    </div>
                  ))}
                </div>
              ))}
            </div>
            <div className="flex-1 flex items-center pl-[2px] pt-[10px]">
              <span className="flex-1 whitespace-nowrap">Distance between the application point of the forces and the theoretical node</span>
              <div className="w-[57px] h-[24px] border border-[#7a7a7a] bg-white text-right pr-[6px] leading-[18px]">0.0</div>
              <span className="ml-[7px] mr-[2px]">mm</span>
            </div>
          </div>
          <div className="w-[8px] shrink-0" />
          <div className="w-[301px] shrink-0 flex flex-col pb-[8px]">
            <PanelHead label="Axis criteria for non-continuous sections" />
            <div className="mt-[8px] h-[300px] shrink-0 bg-white">
              <AxisPicture />
            </div>
          </div>
        </div>
        <div className="h-[40px] shrink-0 bg-[#dcdcdc] border-t-2 border-[#cfcfcf] flex items-center justify-between px-[7px]">
          <button className="w-[69px] h-[25px] border-2 border-[#0078d7] bg-[#e4e4e4] leading-[20px]"><u>A</u>ccept</button>
          <button className="w-[58px] h-[25px] border-2 border-[#b4b4b4] bg-[#e4e4e4] leading-[20px]">Cancel</button>
        </div>
      </div>
    </div>
  );
}
